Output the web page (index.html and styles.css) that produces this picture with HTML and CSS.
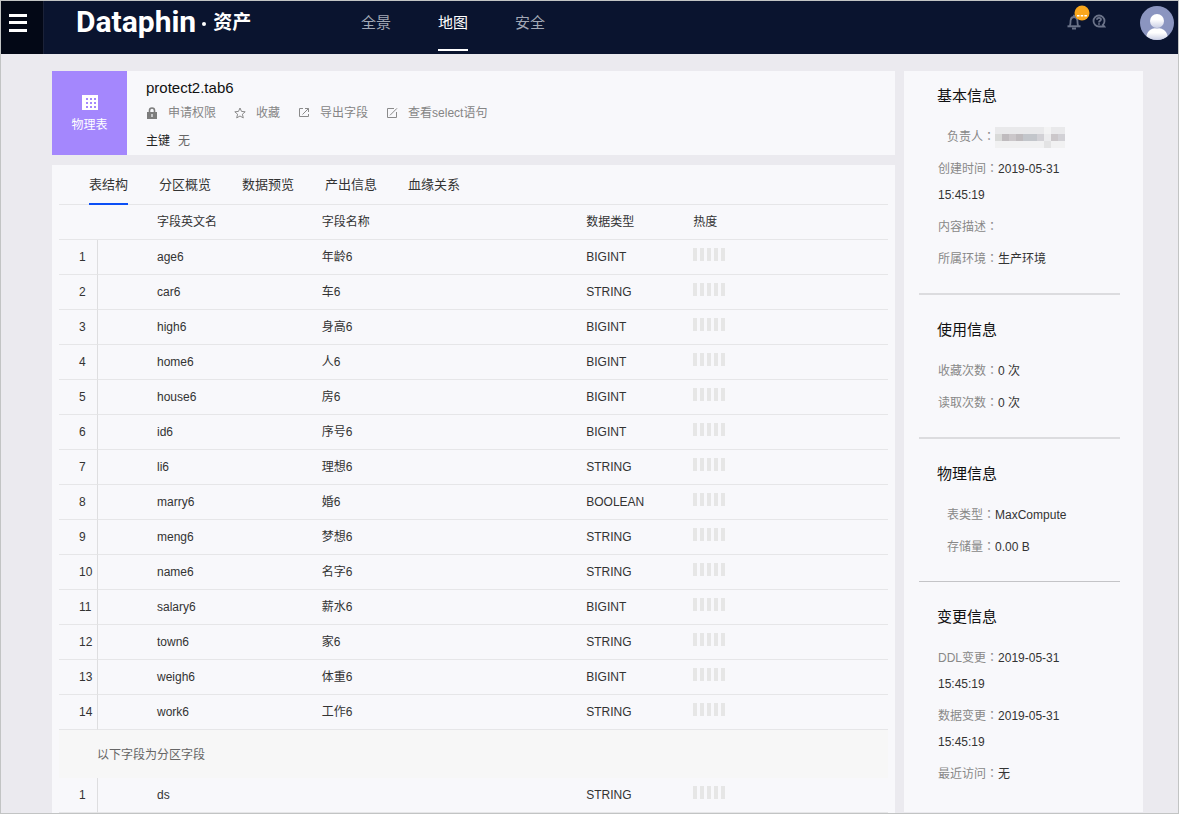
FILE: index.html
```html
<!DOCTYPE html>
<html lang="zh-CN">
<head>
<meta charset="utf-8">
<title>Dataphin · 资产</title>
<link rel="stylesheet" href="styles.css">
</head>
<body>
<div class="page">
  <header class="topbar">
    <button class="menu-btn" type="button" aria-label="菜单">
      <svg width="18" height="18" viewBox="0 0 18 18" fill="#fff"><path d="M0 0h18v3H0zM0 7h18v3H0zM0 15h18v3H0z"/></svg>
    </button>
    <div class="brand"><span class="brand-name">Dataphin</span><span class="brand-dot"></span><span class="brand-sub">资产</span></div>
    <nav class="nav">
      <a href="#">全景</a>
      <a href="#" class="active" aria-current="page">地图</a>
      <a href="#">安全</a>
    </nav>
    <div class="tools">
      <button class="tool" type="button" aria-label="通知">
        <svg width="14" height="16" viewBox="0 0 14 16" fill="none" stroke="#6b7389"><path d="M2.800 12C3.600 10.500 3.400 8.500 3.600 6.500 3.800 4.200 5.200 3 7 3s3.200 1.200 3.400 3.500c.2 2 0 4 .8 5.500" stroke-width="1.800"/><path d="M0.500 12.300h13" stroke-width="2"/><path d="M7 .8V3M5 14.500h4" stroke-width="1.800"/></svg>
        <svg class="badge" width="16" height="16" viewBox="0 0 16 16"><circle cx="8" cy="8" r="7.500" fill="#f9a61c"/><path d="M3 10h2.500v1.500H3zM6.700 10h2.500v1.500H6.700zM10.400 10h2.500v1.500h-2.500z" fill="#fff"/></svg>
      </button>
      <button class="tool" type="button" aria-label="帮助">
        <svg width="14" height="14" viewBox="0 0 14 14" fill="none" stroke="#6b7389" stroke-width="1.800"><path d="M12.300 12.500H7A5.500 5.500 0 1 1 12.500 7c0 1.500-.6 2.800-1.600 3.800z"/><path d="M5 5.700C5 4.500 5.900 3.900 7 3.900s2 .6 2 1.700C9 6.800 7 6.900 7 8.400M7 9.300v1.500"/></svg>
      </button>
      <button class="avatar" type="button" aria-label="用户">
        <svg width="34" height="34" viewBox="0 0 34 34">
          <defs>
            <linearGradient id="av" x1="0" y1="0" x2="0" y2="1"><stop offset="0.400" stop-color="#fff"/><stop offset="1" stop-color="#c9cee4"/></linearGradient>
            <clipPath id="avc"><circle cx="17" cy="17" r="17"/></clipPath>
          </defs>
          <g clip-path="url(#avc)"><rect width="34" height="34" fill="#8b95c0"/><path d="M6 34c0-8 4-12 11-12s11 4 11 12z" fill="url(#av)"/><circle cx="17" cy="15" r="7.500" fill="#8b95c0"/><circle cx="17" cy="15" r="7" fill="url(#av)"/></g>
        </svg>
      </button>
    </div>
  </header>

  <div class="layout">
    <main class="main">
      <section class="card summary">
        <div class="kind">
          <svg width="16" height="15" viewBox="0 0 16 15"><path d="M0 0h16v15H0z" fill="#fff"/><path d="M4 3h2v2H4zM8 3h2v2H8zM12 3h2v2h-2zM4 7h2v2H4zM8 7h2v2H8zM12 7h2v2h-2zM4 11h2v2H4zM8 11h2v2H8zM12 11h2v2h-2z" fill="#a487fd"/></svg>
          <span>物理表</span>
        </div>
        <div class="summary-body">
          <h1>protect2.tab6</h1>
          <div class="actions">
            <button type="button"><svg width="12" height="12" viewBox="0 0 12 12"><path d="M1 5h10v7H1z" fill="#7d7d7d"/><path d="M3.500 5.500V3.500a2.500 2.500 0 0 1 5 0v2" fill="none" stroke="#7d7d7d" stroke-width="1.600"/><path d="M5.400 7h1.200v3H5.400z" fill="#f8f8fb"/></svg>申请权限</button>
            <button type="button"><svg width="12" height="12" viewBox="0 0 12 12" fill="none" stroke="#8a8a8a"><path d="M6 1l1.500 3.400 3.700.4-2.800 2.400.9 3.700L6 9l-3.300 1.900.9-3.700L.8 4.800l3.700-.4z"/></svg>收藏</button>
            <button type="button"><svg width="12" height="12" viewBox="0 0 12 12" fill="none" stroke="#8a8a8a"><path d="M5 1.500H1.500v8h9V7M7 1.500h3.500V5M10.500 1.500l-6 6"/></svg>导出字段</button>
            <button type="button"><svg width="12" height="12" viewBox="0 0 12 12" fill="none" stroke="#8a8a8a"><path d="M8 1.500H1.500v9h9V5M11 1.300L4 8.300"/></svg>查看select语句</button>
          </div>
          <div class="key"><span class="key-label">主键</span><span>无</span></div>
        </div>
      </section>

      <section class="card detail">
        <div class="tabs" role="tablist">
          <button type="button" role="tab" aria-selected="true" class="active">表结构</button>
          <button type="button" role="tab" aria-selected="false">分区概览</button>
          <button type="button" role="tab" aria-selected="false">数据预览</button>
          <button type="button" role="tab" aria-selected="false">产出信息</button>
          <button type="button" role="tab" aria-selected="false">血缘关系</button>
        </div>
        <table class="fields">
          <colgroup><col class="c-index"><col class="c-name"><col class="c-title"><col class="c-type"><col></colgroup>
          <thead>
            <tr><th></th><th class="name">字段英文名</th><th>字段名称</th><th>数据类型</th><th>热度</th></tr>
          </thead>
          <tbody>
            <tr><td class="index">1</td><td class="name">age6</td><td>年龄6</td><td>BIGINT</td><td><span class="heat"><i></i><i></i><i></i><i></i><i></i></span></td></tr>
            <tr><td class="index">2</td><td class="name">car6</td><td>车6</td><td>STRING</td><td><span class="heat"><i></i><i></i><i></i><i></i><i></i></span></td></tr>
            <tr><td class="index">3</td><td class="name">high6</td><td>身高6</td><td>BIGINT</td><td><span class="heat"><i></i><i></i><i></i><i></i><i></i></span></td></tr>
            <tr><td class="index">4</td><td class="name">home6</td><td>人6</td><td>BIGINT</td><td><span class="heat"><i></i><i></i><i></i><i></i><i></i></span></td></tr>
            <tr><td class="index">5</td><td class="name">house6</td><td>房6</td><td>BIGINT</td><td><span class="heat"><i></i><i></i><i></i><i></i><i></i></span></td></tr>
            <tr><td class="index">6</td><td class="name">id6</td><td>序号6</td><td>BIGINT</td><td><span class="heat"><i></i><i></i><i></i><i></i><i></i></span></td></tr>
            <tr><td class="index">7</td><td class="name">li6</td><td>理想6</td><td>STRING</td><td><span class="heat"><i></i><i></i><i></i><i></i><i></i></span></td></tr>
            <tr><td class="index">8</td><td class="name">marry6</td><td>婚6</td><td>BOOLEAN</td><td><span class="heat"><i></i><i></i><i></i><i></i><i></i></span></td></tr>
            <tr><td class="index">9</td><td class="name">meng6</td><td>梦想6</td><td>STRING</td><td><span class="heat"><i></i><i></i><i></i><i></i><i></i></span></td></tr>
            <tr><td class="index">10</td><td class="name">name6</td><td>名字6</td><td>STRING</td><td><span class="heat"><i></i><i></i><i></i><i></i><i></i></span></td></tr>
            <tr><td class="index">11</td><td class="name">salary6</td><td>薪水6</td><td>BIGINT</td><td><span class="heat"><i></i><i></i><i></i><i></i><i></i></span></td></tr>
            <tr><td class="index">12</td><td class="name">town6</td><td>家6</td><td>STRING</td><td><span class="heat"><i></i><i></i><i></i><i></i><i></i></span></td></tr>
            <tr><td class="index">13</td><td class="name">weigh6</td><td>体重6</td><td>BIGINT</td><td><span class="heat"><i></i><i></i><i></i><i></i><i></i></span></td></tr>
            <tr><td class="index">14</td><td class="name">work6</td><td>工作6</td><td>STRING</td><td><span class="heat"><i></i><i></i><i></i><i></i><i></i></span></td></tr>
            <tr class="note"><td colspan="5">以下字段为分区字段</td></tr>
            <tr><td class="index">1</td><td class="name">ds</td><td></td><td>STRING</td><td><span class="heat"><i></i><i></i><i></i><i></i><i></i></span></td></tr>
          </tbody>
        </table>
      </section>
    </main>

    <aside class="card info">
      <section>
        <h2>基本信息</h2>
        <ul>
          <li class="short owner"><span class="label">负责人<span class="colon" lang="zh-TW">：</span></span><svg width="70" height="21" viewBox="0 0 70 21" role="img" aria-label="已隐藏" shape-rendering="crispEdges">
            <path d="M0 0h49v7H0zM56 0h14v7H56z" fill="#e9e9eb"/><path d="M49 0h7v7h-7z" fill="#f3f3f4"/>
            <path d="M0 7h7v7H0z" fill="#d9dad9"/><path d="M7 7h7v7H7zM21 7h7v7h-7z" fill="#bfbbbe"/><path d="M14 7h7v7h-7zM56 7h7v7h-7z" fill="#cbc7ca"/><path d="M28 7h14v7H28z" fill="#c3c6cb"/><path d="M42 7h7v7h-7zM63 7h7v7h-7z" fill="#d2d1d6"/><path d="M49 7h7v7h-7z" fill="#ececee"/>
            <path d="M0 14h49v7H0zM56 14h14v7H56z" fill="#f1f1f2"/><path d="M49 14h7v7h-7z" fill="#e3e3e4"/></svg></li>
          <li><span class="label">创建时间<span class="colon" lang="zh-TW">：</span></span>2019-05-31 15:45:19</li>
          <li><span class="label">内容描述<span class="colon" lang="zh-TW">：</span></span></li>
          <li><span class="label">所属环境<span class="colon" lang="zh-TW">：</span></span>生产环境</li>
        </ul>
      </section>
      <section>
        <h2>使用信息</h2>
        <ul>
          <li><span class="label">收藏次数<span class="colon" lang="zh-TW">：</span></span>0 次</li>
          <li><span class="label">读取次数<span class="colon" lang="zh-TW">：</span></span>0 次</li>
        </ul>
      </section>
      <section class="thin">
        <h2>物理信息</h2>
        <ul>
          <li class="short"><span class="label">表类型<span class="colon" lang="zh-TW">：</span></span>MaxCompute</li>
          <li class="short"><span class="label">存储量<span class="colon" lang="zh-TW">：</span></span>0.00 B</li>
        </ul>
      </section>
      <section>
        <h2>变更信息</h2>
        <ul>
          <li><span class="label">DDL变更<span class="colon" lang="zh-TW">：</span></span>2019-05-31 15:45:19</li>
          <li><span class="label">数据变更<span class="colon" lang="zh-TW">：</span></span>2019-05-31 15:45:19</li>
          <li><span class="label">最近访问<span class="colon" lang="zh-TW">：</span></span>无</li>
        </ul>
      </section>
    </aside>
  </div>
</div>
</body>
</html>
```

FILE: styles.css
```css
* { box-sizing: border-box; }

body {
  margin: 0;
  background: #ebeaef;
  color: #333;
  font: 12px/20px "Liberation Sans", "Noto Sans CJK SC", sans-serif;
}

button {
  padding: 0;
  border: 0;
  background: none;
  color: inherit;
  font: inherit;
  cursor: pointer;
}

a { color: inherit; text-decoration: none; }
svg { display: block; flex: none; }
h1, h2, ul { margin: 0; padding: 0; font-weight: normal; list-style: none; }

.page { min-height: 100vh; border: 1px solid #c2c4c4; }

/* Top bar */
.topbar {
  display: flex;
  height: 53px;
  background: #0a142f;
  color: #fff;
}
.menu-btn {
  display: flex;
  width: 43px;
  padding: 13px 0 0 8px;
  border-right: 1px solid #1b2238;
  background: #030816;
}
.brand {
  display: flex;
  align-items: center;
  width: 285px;
  padding: 0 0 12px 32px;
  font-weight: bold;
}
.brand-name { font-family: Roboto, sans-serif; font-size: 30px; line-height: 40px; }
.brand-dot { width: 4px; height: 4px; margin: 4px 7px 0 6px; border-radius: 50%; background: #fff; }
.brand-sub { padding-top: 2px; font-size: 19px; }

.nav { display: flex; gap: 47px; margin-left: 32px; font-size: 15px; }
.nav a { height: 50px; line-height: 44px; color: #a3a8b5; }
.nav .active { border-bottom: 2px solid #fff; color: #fff; }

.tools { display: flex; align-items: flex-start; margin-left: auto; padding-right: 4px; }
.tool { position: relative; margin: 13px 11px 0 0; }
.badge { position: absolute; top: -9px; left: 7px; }
.avatar { margin: 5px 0 0 23px; }

/* Page columns */
.layout {
  display: grid;
  grid-template-columns: minmax(0, 1fr) 239px;
  gap: 9px;
  padding: 17px 35px 0 51px;
}
.card { background: #f8f8fb; }

.summary { display: flex; height: 84px; margin-bottom: 10px; }
.kind {
  display: flex;
  flex-direction: column;
  align-items: center;
  gap: 5px;
  width: 75px;
  padding-top: 24px;
  background: #a487fd;
  color: #fff;
}
.summary-body { padding: 7px 0 0 19px; }
.summary-body h1 { color: #111; font-size: 15px; line-height: 20px; }
.actions { display: flex; gap: 18px; margin-top: 5px; color: #858585; }
.actions button { display: flex; align-items: center; gap: 10px; }
.key { display: flex; gap: 8px; margin-top: 8px; color: #666; }
.key-label { color: #222; }

/* Tabs and field table */
.detail { padding: 0 7px; }
.tabs {
  display: flex;
  gap: 31px;
  padding-left: 30px;
  border-bottom: 1px solid #e6e6e8;
  font-size: 13px;
}
.tabs button { height: 40px; margin-bottom: -1px; padding-top: 2px; border-bottom: 2px solid transparent; }
.tabs .active { border-color: #0b4ff5; }

.fields { width: 100%; border-collapse: separate; border-spacing: 0; table-layout: fixed; }
.c-index { width: 39px; }
.c-name { width: 27%; }
.c-title { width: 31.9%; }
.c-type { width: 12.9%; }
.fields th, .fields td {
  height: 35px;
  padding: 0;
  border-bottom: 1px solid #e6e6e8;
  font-weight: normal;
  text-align: left;
}
.fields th { padding-bottom: 1px; }
.fields .index { padding-left: 20px; border-right: 1px solid #dedee0; }
.fields .name { padding-left: 59px; }
.fields .note td { height: 48px; padding: 2px 0 0 38px; border: 0; background: #f7f7f7; color: #666; }
.heat { display: flex; gap: 3px; margin-bottom: 5px; }
.heat i { width: 4px; height: 13px; background: #e6e6e6; }

/* Side panel */
.info { padding: 0 23px 0 15px; margin-bottom: 1px; }
.info section { padding: 22px 20px 21px 18px; border-bottom: 2px solid #dcdcdf; }
.info section:first-child { padding-top: 12px; }
.info section.thin { border-bottom: 1px solid #c4c4c7; }
.info section:last-child { border: 0; }
.info h2 { margin-bottom: 15px; color: #111; font-size: 15px; line-height: 26px; }
.info li { margin-bottom: 6px; padding-left: 1px; line-height: 26px; }
.info li:last-child { margin-bottom: 0; }
.info .short { padding-left: 10px; }
.info .owner { display: flex; align-items: center; }
.label { color: #888; }
.colon { font-family: "Noto Sans CJK TC", sans-serif; line-height: 1; }
```
